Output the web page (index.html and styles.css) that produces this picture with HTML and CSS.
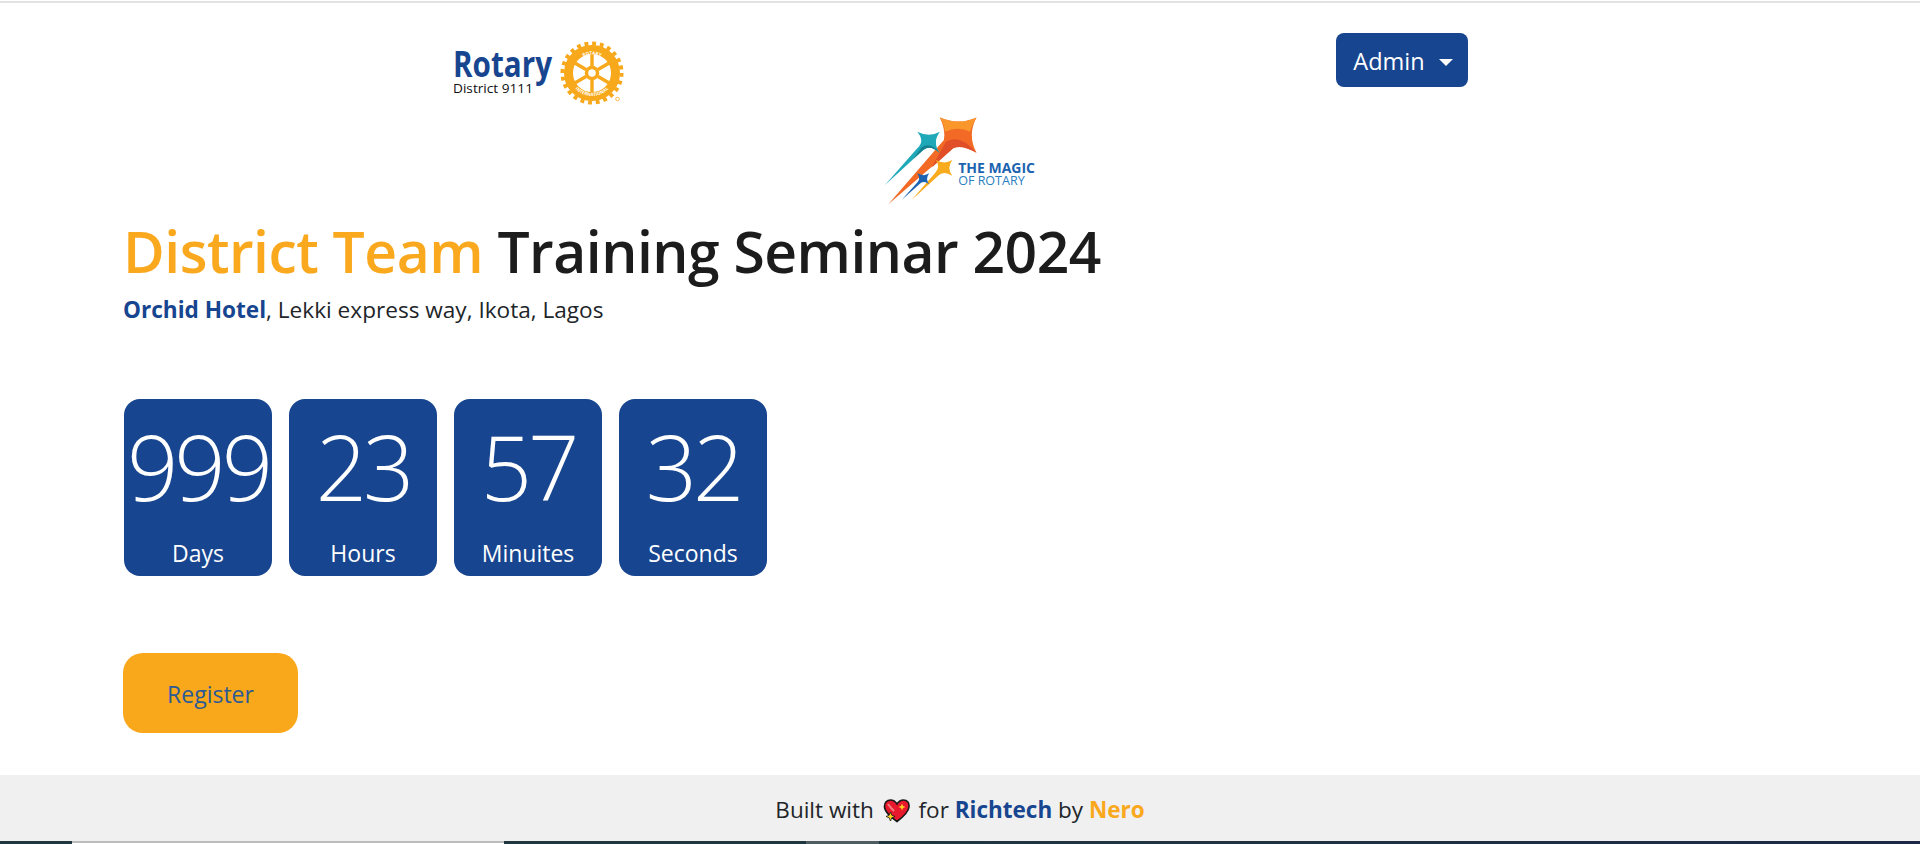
FILE: index.html
```html
<!DOCTYPE html>
<html lang="en">
<head>
    <meta charset="UTF-8">
    <meta name="viewport" content="width=device-width, initial-scale=1.0">
    <title>District Team Training Seminar 2024</title>
    <link rel="stylesheet" href="styles.css">
</head>
<body>
    <div class="top-rule"></div>

    <nav class="site-nav">
        <svg class="rotary-logo" viewBox="0 0 180 70" width="180" height="70" role="img" aria-label="Rotary District 9111">
            <text class="rotary-word" x="3" y="37" textLength="99" lengthAdjust="spacingAndGlyphs">Rotary</text>
            <text class="rotary-district" x="3" y="53" textLength="80" lengthAdjust="spacingAndGlyphs">District 9111</text>
            <g fill="none" stroke="#f7a81b">
                <circle cx="142" cy="33" r="29.5" stroke-width="4" stroke-dasharray="3.86 3.86"/>
                <circle cx="142" cy="33" r="23.5" stroke-width="9"/>
                <circle cx="142" cy="33" r="5.5" stroke-width="3.5"/>
                <path stroke-width="3.4" d="M142 26V12M142 40V54M148 29.5L160 22.500M136 36.500L124 43.500M148 36.500L160 43.500M136 29.500L124 22.500"/>
            </g>
            <path id="ring-top" d="M123.500 33A18.500 18.500 0 0 1 160.500 33" fill="none"/>
            <path id="ring-bottom" d="M119 33A23 23 0 0 0 165 33" fill="none"/>
            <text class="ring-text"><textPath href="#ring-top" startOffset="50%" text-anchor="middle">ROTARY</textPath></text>
            <text class="ring-text"><textPath href="#ring-bottom" startOffset="50%" text-anchor="middle">INTERNATIONAL</textPath></text>
            <circle cx="167.500" cy="59" r="1.800" fill="none" stroke="#f7a81b" stroke-width=".8"/>
        </svg>
        <button class="admin-btn" type="button">Admin<span class="caret"></span></button>
    </nav>

    <div class="theme-logo">
        <svg viewBox="75 30 460 270" width="153" height="90" role="img" aria-label="The Magic of Rotary">
            <path fill="#f26a25" d="M240 37Q298 62 350 37Q322 90 350 143Q305 118 280 130L85 298L252 105Q258 75 240 37Z"/>
            <path fill="#f9962c" d="M240 37Q298 62 350 37Q334 66 331 80Q295 62 255 80Q254 60 240 37Z"/>
            <path fill="#e04f28" d="M258 110Q300 85 350 143Q305 118 280 130L215 188Z"/>
            <path fill="#1fa9b8" d="M172 80Q208 98 240 80Q216 112 240 145Q212 118 190 135L75 240L172 130Q196 108 172 80Z"/>
            <path fill="#15808f" d="M184 128Q212 108 240 145Q212 118 190 135L160 162Z"/>
            <path fill="#f9ab1e" d="M228 165Q254 180 277 165Q260 190 277 212Q250 196 235 212L155 285L225 205Q243 185 228 165Z"/>
            <path fill="#1b63b0" d="M172 205Q192 216 208 205Q195 222 208 238Q190 224 178 238L125 285L170 235Q184 222 172 205Z"/>
            <text class="magic-title" x="295" y="203" textLength="231" lengthAdjust="spacingAndGlyphs">THE MAGIC</text>
            <text class="magic-sub" x="295" y="240" textLength="200" lengthAdjust="spacingAndGlyphs">OF ROTARY</text>
        </svg>
    </div>

    <main class="hero">
        <h1><span class="text-gold">District Team</span> Training Seminar 2024</h1>
        <p class="venue"><strong class="text-blue">Orchid Hotel</strong>, Lekki express way, Ikota, Lagos</p>

        <div class="countdown">
            <div class="time-box"><span class="time-num">999</span><span class="time-label">Days</span></div>
            <div class="time-box"><span class="time-num">23</span><span class="time-label">Hours</span></div>
            <div class="time-box"><span class="time-num">57</span><span class="time-label">Minuites</span></div>
            <div class="time-box"><span class="time-num">32</span><span class="time-label">Seconds</span></div>
        </div>

        <a class="register-btn" href="#">Register</a>
    </main>

    <footer class="site-footer">
        Built with
        <svg class="heart" viewBox="0 0 27 24" width="27" height="24" aria-hidden="true">
            <path fill="#e8192c" stroke="#1a1a1a" stroke-width="1.600" d="M14 22.500C8 18 2 13.500 1.500 8C1.200 3.500 4 1 7.500 1C10.500 1 12.500 2.500 14 5C15.500 2.500 17.500 1 20.500 1C24 1 26.500 3.500 26 8C25.500 13.500 20 18 14 22.500Z"/>
            <path fill="none" stroke="#f47c7c" stroke-width="2.200" d="M5 5C7 8 9 10 11 12"/>
            <path fill="#ffd21f" stroke="#1a1a1a" stroke-width=".8" d="M7.500 13L8.800 16.200L12 17.500L8.800 18.800L7.500 22L6.200 18.800L3 17.500L6.200 16.200Z"/>
            <path fill="#ffd21f" d="M19 4.500L20 7L22.500 8L20 9L19 11.500L18 9L15.500 8L18 7Z"/>
        </svg>
        for <strong class="text-blue">Richtech</strong> by <strong class="text-gold">Nero</strong>
    </footer>

    <div class="window-strip">
        <span class="strip-dark strip-a"></span>
        <span class="strip-light"></span>
        <span class="strip-dark strip-b"></span>
        <span class="strip-thumb"></span>
        <span class="strip-tail"></span>
    </div>
</body>
</html>
```

FILE: styles.css
```css
* {
    box-sizing: border-box;
    margin: 0;
    padding: 0;
}

body {
    font-family: "Open Sans", "Noto Sans", sans-serif;
    color: #212529;
    background: #fff;
    height: 100vh;
    display: flex;
    flex-direction: column;
    overflow: hidden;
}

.text-gold {
    color: #faa81e;
}

.text-blue {
    color: #17458f;
}

.top-rule {
    height: 2px;
    margin-top: 1px;
    background: #e2e2e2;
}

.site-nav {
    display: flex;
    justify-content: space-between;
    align-items: flex-start;
    padding: 30px 452px 0 450px;
    height: 107px;
}

.rotary-logo {
    display: block;
    margin-top: 7px;
}

.rotary-word {
    font-size: 36px;
    font-weight: 700;
    fill: #17458f;
}

.rotary-district {
    font-size: 13px;
    font-weight: 500;
    fill: #111;
}

.ring-text {
    font-size: 4.500px;
    font-weight: 700;
    fill: #fff;
}

.admin-btn {
    width: 132px;
    height: 54px;
    padding: 2px 0 0 2px;
    font-family: inherit;
    font-size: 23.500px;
    color: #fff;
    background: #17458f;
    border: none;
    border-radius: 8px;
    cursor: pointer;
}

.caret {
    display: inline-block;
    margin-left: 14px;
    vertical-align: 4px;
    border-top: 7px solid #fff;
    border-left: 7px solid transparent;
    border-right: 7px solid transparent;
}

.theme-logo {
    padding-top: 5px;
    text-align: center;
    height: 95px;
    padding-left: 2px;
}

.magic-title {
    font-size: 40px;
    font-weight: 700;
    fill: #1b63b0;
}

.magic-sub {
    font-size: 36px;
    font-weight: 400;
    fill: #2a7dbf;
}

.hero {
    flex: 1;
    padding-left: 123px;
}

h1 {
    font-size: 57px;
    font-weight: 600;
    line-height: 80px;
    margin-top: 6px;
    letter-spacing: -0.5px;
    color: #1c1c1c;
}

.venue {
    font-size: 22.600px;
    line-height: 30px;
    margin-top: 4px;
}

.countdown {
    display: flex;
    gap: 17px;
    margin-top: 74px;
    margin-left: 1px;
}

.time-box {
    width: 148px;
    height: 177px;
    background: #17458f;
    border-radius: 16px;
    color: #fff;
    display: flex;
    flex-direction: column;
    align-items: center;
}

.time-num {
    font-size: 90px;
    font-weight: 300;
    line-height: 120px;
    margin-top: 7px;
    letter-spacing: -4px;
}

.time-label {
    font-size: 23px;
    line-height: 32px;
    margin-top: 11px;
}

.register-btn {
    display: flex;
    align-items: center;
    justify-content: center;
    width: 175px;
    height: 80px;
    margin-top: 77px;
    padding-top: 2px;
    font-size: 23px;
    color: #2b5a94;
    background: #f9a81b;
    border-radius: 20px;
    text-decoration: none;
}

.site-footer {
    height: 66px;
    background: #f0f0f0;
    text-align: center;
    font-size: 22.500px;
    line-height: 70px;
}

.heart {
    margin: 0 3px;
    vertical-align: -5px;
}

.window-strip {
    display: flex;
    height: 3px;
}

.strip-dark {
    background: #20373f;
}

.strip-a {
    width: 72px;
}

.strip-b {
    width: 302px;
}

.strip-light {
    width: 432px;
    background: linear-gradient(#bcbcbc 60%, #fff 60%);
}

.strip-thumb {
    width: 73px;
    background: #4f5d63;
}

.strip-tail {
    flex: 1;
    background: linear-gradient(90deg, #20373f, #1c2845);
}
```
